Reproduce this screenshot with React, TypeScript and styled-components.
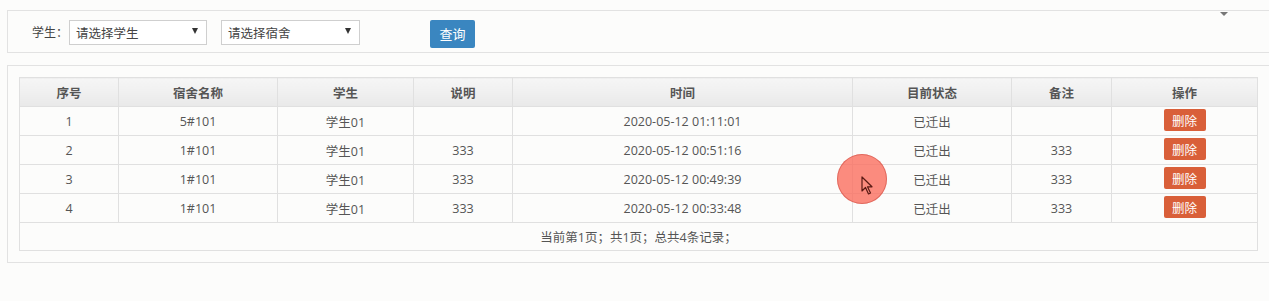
import React, { FC } from "react";
import styled, { createGlobalStyle } from "styled-components";

const GlobalStyle = createGlobalStyle`
    html, body {
        margin: 0;
        padding: 0;
        background: #fcfcfb;
        overflow: hidden;
    }
    body {
        font-family: "Open Sans", "Noto Sans CJK SC", sans-serif;
        font-size: 12.5px;
        color: #555;
    }
`;

interface Record {
    id: number;
    dorm: string;
    student: string;
    note: string;
    time: string;
    status: string;
    remark: string;
}

const records: Record[] = [
    { id: 1, dorm: "5#101", student: "学生01", note: "", time: "2020-05-12 01:11:01", status: "已迁出", remark: "" },
    { id: 2, dorm: "1#101", student: "学生01", note: "333", time: "2020-05-12 00:51:16", status: "已迁出", remark: "333" },
    { id: 3, dorm: "1#101", student: "学生01", note: "333", time: "2020-05-12 00:49:39", status: "已迁出", remark: "333" },
    { id: 4, dorm: "1#101", student: "学生01", note: "333", time: "2020-05-12 00:33:48", status: "已迁出", remark: "333" },
];

const columns = [
    { title: "序号", width: 99 },
    { title: "宿舍名称", width: 159 },
    { title: "学生", width: 136 },
    { title: "说明", width: 99 },
    { title: "时间", width: 340 },
    { title: "目前状态", width: 159 },
    { title: "备注", width: 100 },
    { title: "操作", width: 146 },
];

const Page = styled.div`
    position: relative;
    padding: 10px 0 0 7px;
    margin-right: -20px;
`;

const SearchBar = styled.div`
    position: relative;
    height: 41px;
    border: 1px solid #e2e2e2;
    display: flex;
    align-items: center;
    padding-left: 24px;
`;

const Label = styled.span`
    color: #444;
    margin-right: 1px;
    font-size: 12px;
`;

const FakeSelect = styled.div<{ $width: number; $gap?: number }>`
    width: ${(p) => p.$width}px;
    height: 25px;
    box-sizing: border-box;
    border: 1px solid #cfcfcf;
    background: #fff;
    margin-left: ${(p) => p.$gap ?? 0}px;
    margin-top: 1px;
    display: flex;
    align-items: center;
    justify-content: space-between;
    padding: 0 8px 0 6px;
    color: #444;
    & > i {
        width: 0;
        height: 0;
        border-left: 3px solid transparent;
        border-right: 3px solid transparent;
        border-top: 6px solid #333;
        margin-top: -2px;
    }
`;

const SearchButton = styled.button`
    margin-left: 70px;
    margin-top: 4px;
    width: 45px;
    height: 28px;
    border: none;
    border-radius: 2px;
    background: #3a86c0;
    color: #fff;
    font-family: inherit;
    font-size: 13px;
    padding: 0;
`;

const Collapse = styled.span`
    position: absolute;
    left: 1212px;
    top: 1px;
    width: 0;
    height: 0;
    border-left: 4px solid transparent;
    border-right: 4px solid transparent;
    border-top: 4px solid #777;
`;

const ListPanel = styled.div`
    margin-top: 12px;
    border: 1px solid #e2e2e2;
    padding: 11px 31px 11px 11px;
`;

const Table = styled.table`
    border-collapse: collapse;
    table-layout: fixed;
    width: 1239px;
    & th,
    & td {
        border: 1px solid #e0e0e0;
        text-align: center;
        padding: 0;
        height: 28px;
    }
    & th {
        background: linear-gradient(#f6f6f6, #e9e9e9);
        color: #555;
        font-weight: 600;
    }
    & td {
        color: #555;
        background: #fcfcfb;
    }
`;

const DeleteButton = styled.button`
    width: 42px;
    height: 22px;
    border: none;
    border-radius: 2px;
    background: #d95f39;
    color: #fff;
    font-family: inherit;
    font-size: 12.5px;
    padding: 0;
    vertical-align: middle;
    margin-top: -2px;
`;

const Footer = styled.td`
    && {
        height: 27px;
    }
`;

const CursorMark = styled.div`
    position: absolute;
    left: 837px;
    top: 154px;
    width: 50px;
    height: 50px;
    border-radius: 50%;
    background: rgba(250, 110, 95, 0.8);
    box-shadow: inset 0 0 0 1px rgba(200, 70, 60, 0.5);
    & > svg {
        position: absolute;
        left: 24px;
        top: 22px;
    }
`;

const App: FC = () => {
    return (
        <>
            <GlobalStyle />
            <Page>
                <SearchBar>
                    <Label>学生：</Label>
                    <FakeSelect $width={138}>
                        请选择学生<i />
                    </FakeSelect>
                    <FakeSelect $width={139} $gap={14}>
                        请选择宿舍<i />
                    </FakeSelect>
                    <SearchButton>查询</SearchButton>
                    <Collapse />
                </SearchBar>
                <ListPanel>
                    <Table>
                        <colgroup>
                            {columns.map((c) => (
                                <col key={c.title} style={{ width: c.width }} />
                            ))}
                        </colgroup>
                        <thead>
                            <tr>
                                {columns.map((c) => (
                                    <th key={c.title}>{c.title}</th>
                                ))}
                            </tr>
                        </thead>
                        <tbody>
                            {records.map((r) => (
                                <tr key={r.id}>
                                    <td>{r.id}</td>
                                    <td>{r.dorm}</td>
                                    <td>{r.student}</td>
                                    <td>{r.note}</td>
                                    <td>{r.time}</td>
                                    <td>{r.status}</td>
                                    <td>{r.remark}</td>
                                    <td>
                                        <DeleteButton>删除</DeleteButton>
                                    </td>
                                </tr>
                            ))}
                            <tr>
                                <Footer colSpan={8}>当前第1页；共1页；总共4条记录；</Footer>
                            </tr>
                        </tbody>
                    </Table>
                </ListPanel>
                <CursorMark>
                    <svg width="14" height="20" viewBox="0 0 14 20">
                        <path
                            d="M1 1 L1 15 L4.5 11.5 L7.5 18 L9.5 17 L6.5 10.8 L11 10.8 Z"
                            fill="none"
                            stroke="#5a1a14"
                            strokeWidth="1.2"
                            strokeLinejoin="round"
                        />
                    </svg>
                </CursorMark>
            </Page>
        </>
    );
};

export default App;
